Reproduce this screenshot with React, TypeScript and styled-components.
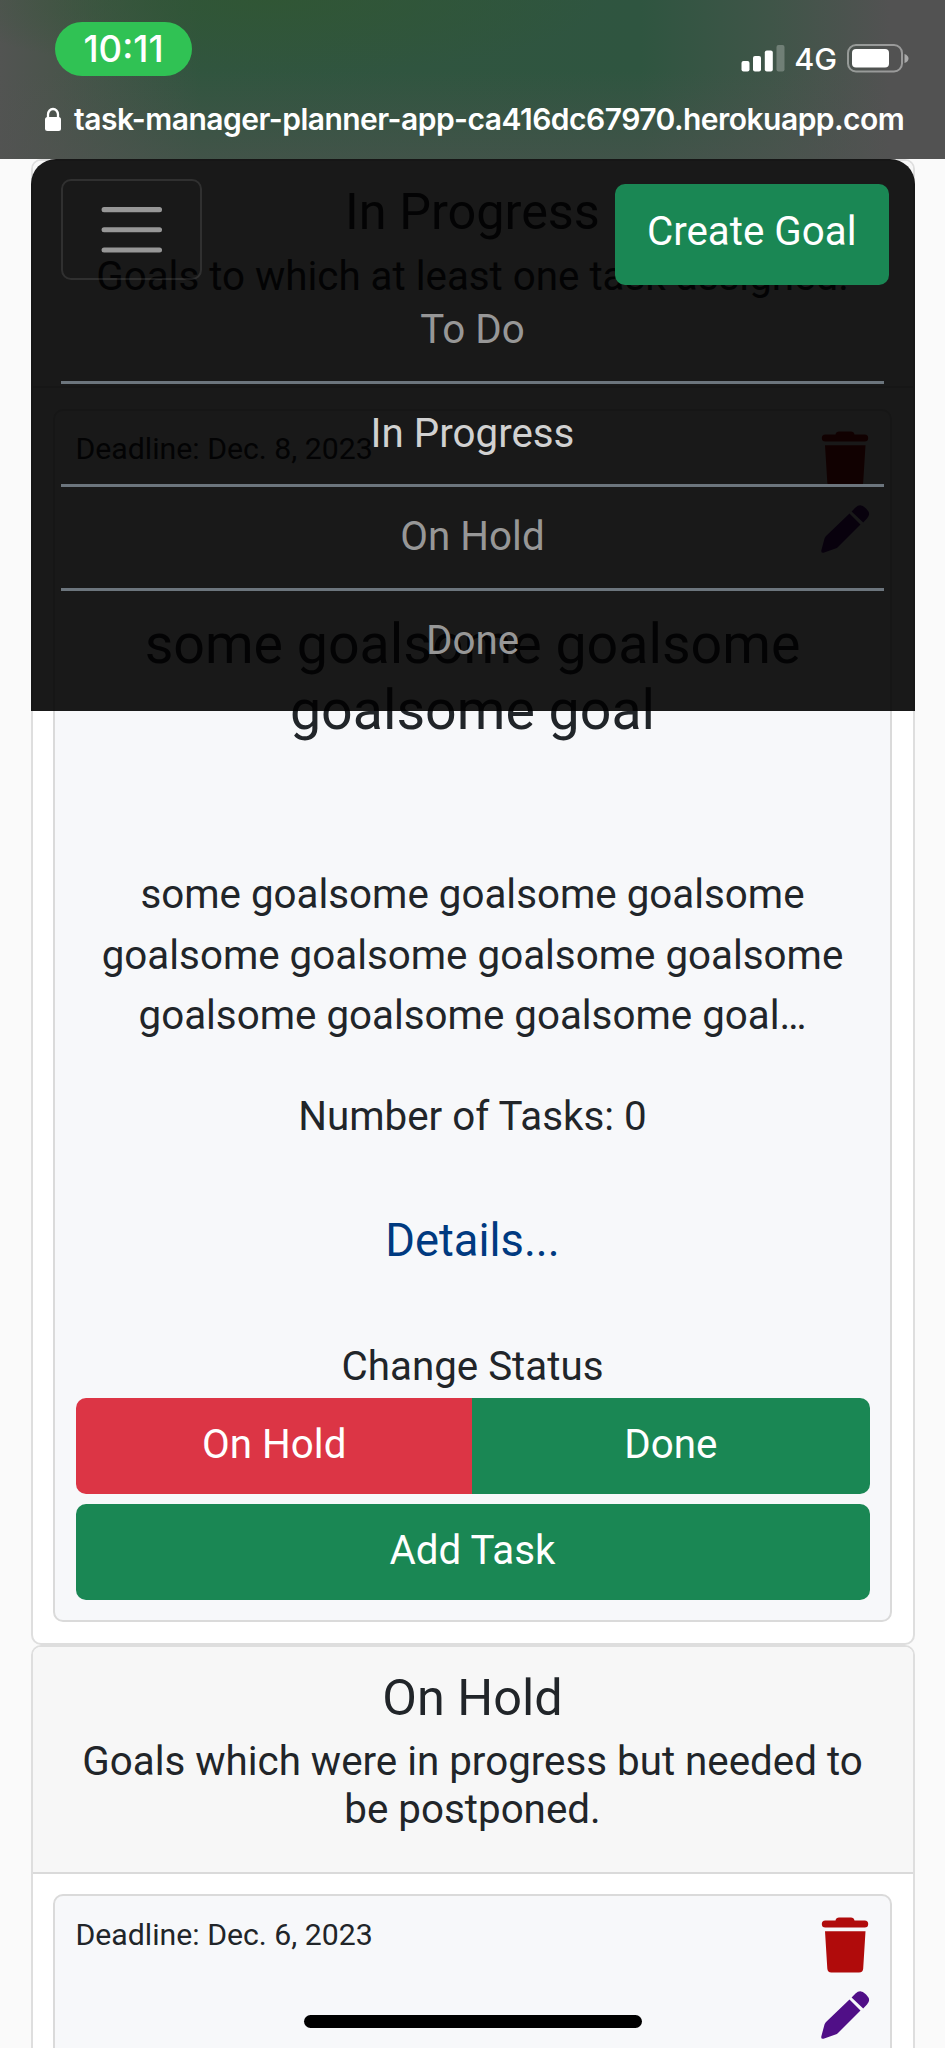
import React from "react";
import styled, { createGlobalStyle } from "styled-components";

const Global = createGlobalStyle`
  *, *::before, *::after { box-sizing: border-box; }
  html, body { margin: 0; height: 2048px; overflow: hidden; }
  body { background: #fafafa; color: #212529; font-family: Roboto, sans-serif; font-size: 40.32px; line-height: 60.5px; }
  h2, h3, h4, p { margin: 0; font-weight: 400; }
`;

const Screen = styled.div`
  position: relative;
  width: 945px;
  height: 2048px;
  overflow: hidden;
`;

const StatusBar = styled.header`
  height: 159px;
  padding: 22px 36px 0 55px;
  color: #fff;
  font-family: Inter, sans-serif;
  background:
    radial-gradient(ellipse 330px 75px at 270px 0, rgba(48, 86, 52, 0.9), rgba(48, 86, 52, 0) 100%),
    linear-gradient(to bottom, rgba(82, 82, 82, 0) 45%, rgba(82, 82, 82, 0.5) 100%),
    linear-gradient(to right, #525452 0, #4b544c 50px, #31553f 200px, #2f5540 640px, #3f5548 770px, #525252 890px);
`;

const StatusRow = styled.div`
  display: flex;
  justify-content: space-between;
  height: 54px;
`;

const Clock = styled.div`
  width: 137px;
  height: 54px;
  border-radius: 27px;
  background: #30c254;
  font-size: 36.5px;
  font-weight: 500;
  line-height: 54px;
  text-align: center;
`;

const Signals = styled.div`
  display: flex;
  align-items: center;
  height: 30px;
  margin-top: 21px;
`;

const Network = styled.span`
  display: flex;
  justify-content: center;
  width: 40.5px;
  margin: 2px 11px 0;
  font-size: 30.5px;
  font-weight: 500;
  line-height: 30px;
`;

const Address = styled.div`
  display: flex;
  align-items: center;
  height: 40px;
  margin: 23px 0 0 -11px;
  font-size: 30px;
  font-weight: 600;
  letter-spacing: -0.52px;
  line-height: 40px;
  white-space: nowrap;

  svg { flex: none; margin-right: 12px; }
`;

const Board = styled.main`
  padding: 0 30.5px;
`;

const Column = styled.section`
  border: 2px solid #dedede;
  border-radius: 10px;
  background: #fff;
  overflow: hidden;
`;

const ColumnHead = styled.div`
  height: 227px;
  padding: 21px 40px 0;
  border-bottom: 2px solid #dadada;
  background: #f7f7f7;
  text-align: center;
`;

const ColumnTitle = styled.h2`
  margin-bottom: 10px;
  font-size: 50.4px;
  line-height: 60.5px;
`;

const ColumnText = styled.p`
  line-height: 48.4px;
`;

const ColumnBody = styled.div`
  padding: 20.5px;
`;

const GoalCard = styled.article`
  min-height: 240px;
  padding: 20.5px;
  border: 2px solid #dadada;
  border-radius: 10px;
  background: #f7f8fa;
  text-align: center;
`;

const GoalTop = styled.div`
  display: flex;
  justify-content: space-between;
  height: 126px;
`;

const Deadline = styled.small`
  font-size: 30.24px;
  line-height: 36px;
`;

const Actions = styled.div`
  display: flex;
  flex-direction: column;
  gap: 17px;
`;

const GoalTitle = styled.h3`
  margin-top: 55px;
  font-size: 55.5px;
  line-height: 66px;
`;

const GoalText = styled.p`
  margin-top: 121px;
`;

const TaskCount = styled.p`
  margin-top: 40.5px;
`;

const DetailsLink = styled.a`
  display: block;
  margin-top: 63.5px;
  color: #003a80;
  font-size: 45.3px;
`;

const StatusLabel = styled.p`
  margin-top: 65px;
`;

const ButtonRow = styled.div`
  display: flex;
  margin-top: 0.5px;
  border-radius: 10px;
  overflow: hidden;
`;

const Button = styled.button<{ $color: string }>`
  flex: 1;
  width: 100%;
  height: 96px;
  padding: 0 0 1px;
  border: 0;
  background: ${(p) => p.$color};
  color: #fff;
  font: inherit;

  & + & { margin-left: -1px; }
`;

const AddButton = styled(Button)`
  display: block;
  margin-top: 10px;
  border-radius: 10px;
`;

const Menu = styled.nav`
  position: absolute;
  top: 159px;
  left: 30.5px;
  width: 884px;
  height: 551.5px;
  padding: 20px 30.5px;
  border-radius: 25px 25px 0 0;
  background: rgba(0, 0, 0, 0.9);
`;

const MenuBar = styled.div`
  display: flex;
  justify-content: space-between;
  height: 101px;
`;

const Toggler = styled.button`
  display: flex;
  align-items: center;
  justify-content: center;
  width: 141px;
  height: 101px;
  padding: 0;
  border: 2px solid rgba(255, 255, 255, 0.1);
  border-radius: 10px;
  background: transparent;
`;

const CreateButton = styled.button`
  width: 274.5px;
  height: 101px;
  margin: 5px -5px 0 0;
  padding: 0 0 5px;
  border: 0;
  border-radius: 10px;
  background: #1a8754;
  color: #fff;
  font: inherit;
`;

const MenuItem = styled.a<{ $active?: boolean }>`
  display: block;
  height: 103.5px;
  padding-top: 20px;
  border-bottom: 3px solid #6c757d;
  color: ${(p) => (p.$active ? "#d1d1d1" : "#979797")};
  text-align: center;

  &:last-child { border-bottom: 0; }
`;

const HomeIndicator = styled.div`
  position: absolute;
  left: 304px;
  bottom: 20px;
  width: 338px;
  height: 13px;
  border-radius: 7px;
  background: #000;
`;

const TrashIcon = () => (
  <svg width="50" height="56" viewBox="0 0 50 56" fill="#b00b0b">
    <path d="M15.5 3.5C16 1.2 17.200 0.500 19 0.500H31C32.800 0.500 34 1.200 34.500 3.500H44.700A3.500 3.500 0 0 1 44.700 10.500H5.300A3.500 3.500 0 0 1 5.300 3.500Z" />
    <path d="M5 14.200H45.500L43.200 51.500Q43 55.500 39 55.500H11.300Q7.600 55.500 7.300 51.500Z" />
  </svg>
);

const PencilIcon = () => (
  <svg width="50" height="50" viewBox="0 0 50 50" fill="#500f87">
    <path d="M29.500 9.500L40.500 20.500L18 43Q17 44 15.500 44.500L3.500 48.700Q0.800 49.200 1.300 46.500L4.500 34.500Q5 33 6 32Z" />
    <path d="M31.600 7.400L35.500 3.500Q40.500 -1 45.500 4L46.500 5Q51.500 10 47 14.500L43.200 18.500Z" />
  </svg>
);

const LockIcon = () => (
  <svg width="18" height="25" viewBox="0 0 18 25">
    <path d="M4 11V7.500a5 5.500 0 0 1 10 0V11" fill="none" stroke="#fff" strokeWidth="2.300" />
    <rect x="1" y="10" width="16" height="14" rx="2.500" fill="#fff" />
  </svg>
);

const SignalIcon = () => (
  <svg width="44" height="28" viewBox="0 0 44 28" fill="#fff">
    <rect x="0.500" y="17" width="8" height="10.500" rx="2" />
    <rect x="12" y="12" width="8" height="15.500" rx="2" />
    <rect x="23.800" y="6.500" width="8" height="21" rx="2" />
    <rect x="35.500" y="1" width="8" height="26.500" rx="2" opacity=".25" />
  </svg>
);

const BatteryIcon = () => (
  <svg width="62" height="29" viewBox="0 0 62 29">
    <rect x="1" y="1" width="54" height="26.500" rx="8" fill="none" stroke="#fff" strokeOpacity=".42" strokeWidth="2" />
    <rect x="5" y="5" width="37" height="18.500" rx="4" fill="#fff" />
    <path d="M57.500 10Q61.500 11.500 61.500 14.500T57.500 19Z" fill="#fff" opacity=".5" />
  </svg>
);

const BurgerIcon = () => (
  <svg width="75.600" height="75.600" viewBox="0 0 30 30">
    <path d="M4 7h22M4 15h22M4 23h22" stroke="rgba(255,255,255,.55)" strokeLinecap="round" strokeWidth="2" />
  </svg>
);

const GoalHeader = ({ date }: { date: string }) => (
  <GoalTop>
    <Deadline>Deadline: {date}</Deadline>
    <Actions>
      <TrashIcon />
      <PencilIcon />
    </Actions>
  </GoalTop>
);

const menuItems = ["To Do", "In Progress", "On Hold", "Done"];

export default function App() {
  return (
    <Screen>
      <Global />
      <StatusBar>
        <StatusRow>
          <Clock>10:11</Clock>
          <Signals>
            <SignalIcon />
            <Network>4G</Network>
            <BatteryIcon />
          </Signals>
        </StatusRow>
        <Address>
          <LockIcon />
          <span>task-manager-planner-app-ca416dc67970.herokuapp.com</span>
        </Address>
      </StatusBar>
      <Board>
        <Column>
          <ColumnHead>
            <ColumnTitle>In Progress</ColumnTitle>
            <ColumnText>Goals to which at least one task assigned.</ColumnText>
          </ColumnHead>
          <ColumnBody>
            <GoalCard>
              <GoalHeader date="Dec. 8, 2023" />
              <GoalTitle>some goalsome goalsome goalsome goal</GoalTitle>
              <GoalText>
                some goalsome goalsome goalsome goalsome goalsome goalsome goalsome goalsome goalsome
                goalsome goal…
              </GoalText>
              <TaskCount>Number of Tasks: 0</TaskCount>
              <DetailsLink>Details...</DetailsLink>
              <StatusLabel>Change Status</StatusLabel>
              <ButtonRow>
                <Button $color="#dc3545">On Hold</Button>
                <Button $color="#1a8754">Done</Button>
              </ButtonRow>
              <AddButton $color="#1a8754">Add Task</AddButton>
            </GoalCard>
          </ColumnBody>
        </Column>
        <Column>
          <ColumnHead>
            <ColumnTitle>On Hold</ColumnTitle>
            <ColumnText>Goals which were in progress but needed to be postponed.</ColumnText>
          </ColumnHead>
          <ColumnBody>
            <GoalCard>
              <GoalHeader date="Dec. 6, 2023" />
            </GoalCard>
          </ColumnBody>
        </Column>
      </Board>
      <Menu>
        <MenuBar>
          <Toggler aria-label="Toggle navigation">
            <BurgerIcon />
          </Toggler>
          <CreateButton>Create Goal</CreateButton>
        </MenuBar>
        {menuItems.map((item) => (
          <MenuItem key={item} $active={item === "In Progress"}>
            {item}
          </MenuItem>
        ))}
      </Menu>
      <HomeIndicator />
    </Screen>
  );
}
